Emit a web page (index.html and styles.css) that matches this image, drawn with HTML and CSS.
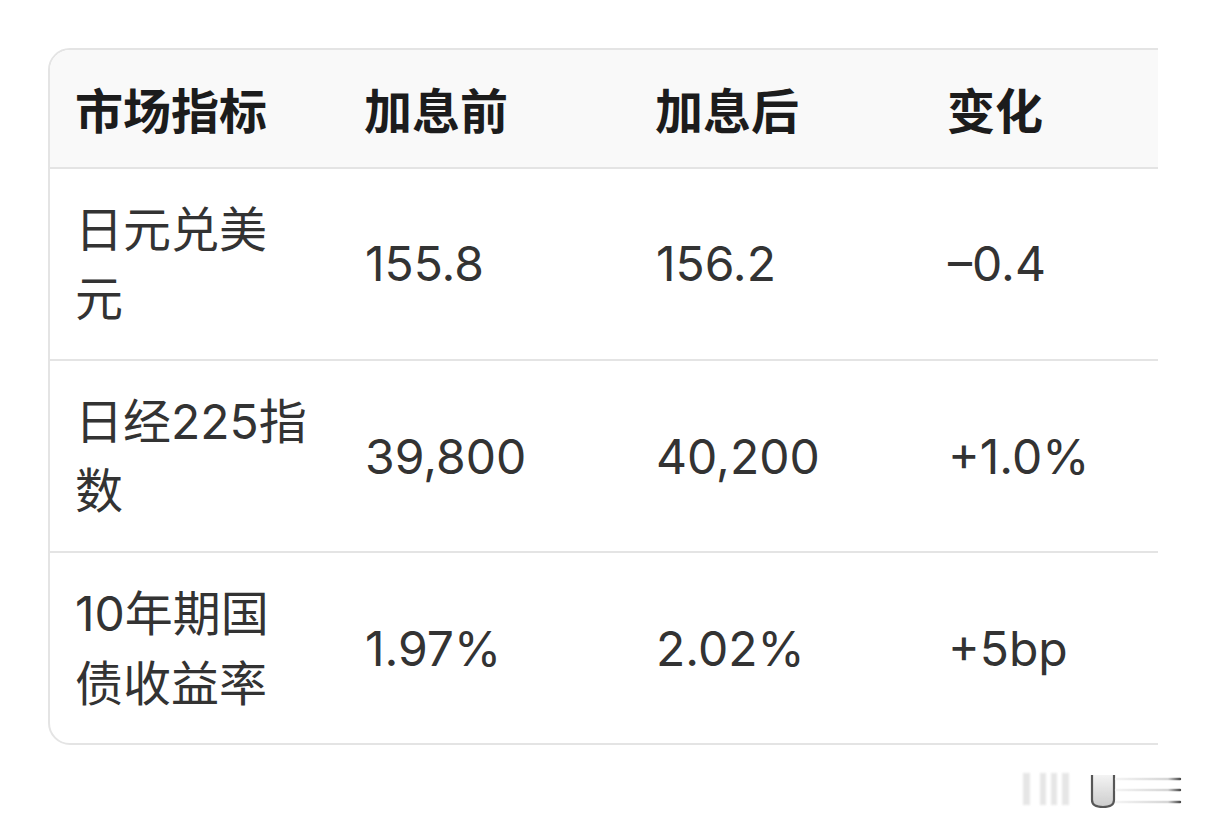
FILE: index.html
```html
<!DOCTYPE html>
<html lang="zh-CN">
<head>
<meta charset="utf-8">
<link rel="stylesheet" href="styles.css">
</head>
<body>
<div class="page">
  <div class="clip">
    <div class="card">
      <table class="grid">
        <colgroup>
          <col class="c1"><col class="c2"><col class="c3"><col class="c4">
        </colgroup>
        <thead>
          <tr><th>市场指标</th><th>加息前</th><th>加息后</th><th>变化</th></tr>
        </thead>
        <tbody>
          <tr><td>日元兑美元</td><td>155.8</td><td>156.2</td><td>–0.4</td></tr>
          <tr><td>日经225指数</td><td>39,800</td><td>40,200</td><td>+1.0%</td></tr>
          <tr><td>10年期国债收益率</td><td>1.97%</td><td>2.02%</td><td>+5bp</td></tr>
        </tbody>
      </table>
    </div>
  </div>
  <div class="footer">
    <svg class="mark" width="170" height="44" viewBox="0 0 170 44">
      <defs>
        <linearGradient id="lg" gradientUnits="userSpaceOnUse" x1="98" x2="163" y1="0" y2="0">
          <stop offset="0" stop-color="#f4f4f4"/>
          <stop offset="0.8" stop-color="#d6d6d6"/>
          <stop offset="1" stop-color="#444"/>
        </linearGradient>
        <linearGradient id="ug" x1="0" x2="0" y1="0" y2="1">
          <stop offset="0" stop-color="#f2f2f2"/>
          <stop offset="1" stop-color="#c4c4c4"/>
        </linearGradient>
        <filter id="bl"><feGaussianBlur stdDeviation="1.2"/></filter>
      </defs>
      <g filter="url(#bl)" fill="#e6e6e6">
        <rect x="5" y="6" width="7" height="32"/>
        <rect x="22" y="6" width="6" height="32"/>
        <rect x="33" y="6" width="6" height="32"/>
        <rect x="44" y="6" width="7" height="32"/>
      </g>
      <path d="M74 8 V33 Q74 40 85 40 Q96 40 96 33 V8" fill="url(#ug)" stroke="#3a3a3a" stroke-width="2.2" opacity="0.85"/>
      <g stroke="url(#lg)" stroke-width="2.4" stroke-linecap="round">
        <line x1="98" y1="12" x2="162" y2="12"/>
        <line x1="98" y1="23" x2="162" y2="23"/>
        <line x1="98" y1="35" x2="162" y2="35"/>
      </g>
    </svg>
  </div>
</div>
</body>
</html>
```

FILE: styles.css
```css
html, body {
  margin: 0;
  padding: 0;
  background: #ffffff;
}

.page {
  width: 1206px;
  height: 828px;
  padding-top: 48px;
  box-sizing: border-box;
  font-family: "Inter", "Noto Sans CJK SC", sans-serif;
  overflow: hidden;
}

.clip {
  margin-left: 48px;
  width: 1110px;
  overflow: hidden;
}

.card {
  width: 1200px;
  border: 2px solid #e4e4e4;
  border-radius: 22px;
  overflow: hidden;
}

.grid {
  border-collapse: collapse;
  table-layout: fixed;
  width: 1196px;
}

.c1 { width: 288px; }
.c2 { width: 291px; }
.c3 { width: 292px; }
.c4 { width: 325px; }

.grid th,
.grid td {
  font-size: 48px;
  line-height: 69.6px;
  text-align: left;
  vertical-align: middle;
  padding: 26px 28px 25px 25px;
  color: #333333;
  font-weight: 400;
  word-break: break-all;
}

.grid th {
  padding-top: 24px;
  padding-bottom: 23px;
  background: #f9f9f9;
  color: #1c1c1c;
  font-weight: 700;
  font-family: "Noto Sans CJK SC", sans-serif;
}

.grid td:not(:first-child) {
  padding-left: 27px;
}

.grid th:not(:first-child) {
  padding-left: 26px;
}

.grid tbody td {
  border-top: 2px solid #e4e4e4;
}

.footer {
  display: flex;
  justify-content: flex-end;
  padding-right: 18px;
  margin-top: 22px;
}

.mark {
  display: block;
}
```
